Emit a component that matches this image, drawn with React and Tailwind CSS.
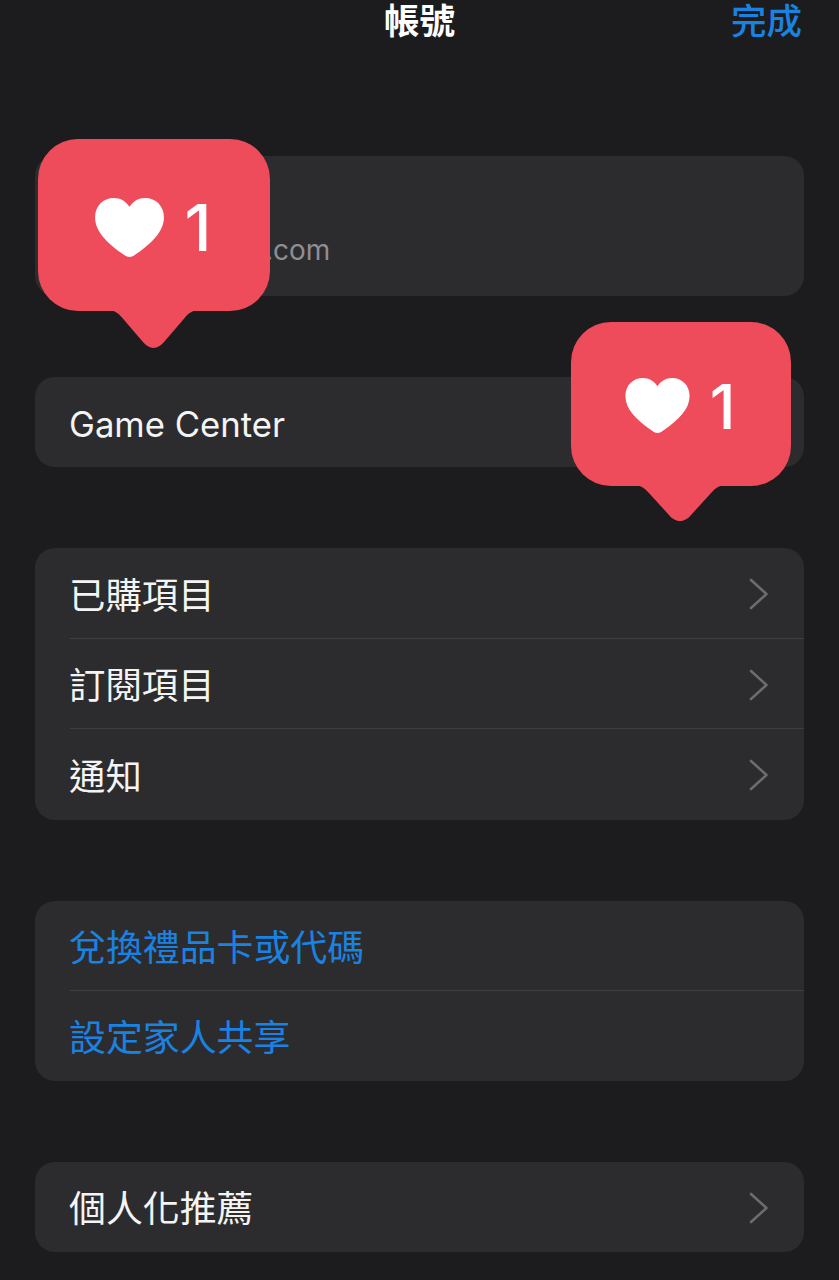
import React from "react";

const CJK = '"Inter","Noto Sans CJK TC",sans-serif';

function Chevron() {
  return (
    <svg width="20" height="32" viewBox="0 0 20 32" fill="none" className="shrink-0">
      <path d="M2 2 L17.5 16 L2 30" stroke="#6b6b70" strokeWidth="2.6" strokeLinecap="round" strokeLinejoin="round" />
    </svg>
  );
}

function Row({ label, blue, chevron, last, tall, latin, small }) {
  return (
    <div className={`relative flex items-center pl-[35px] pr-[35px] ${tall ? "h-[91px]" : "h-[90px]"}`}>
      <span className={`leading-none pt-[5px] -ml-px ${latin ? "text-[34.7px]" : small ? "text-[36.4px]" : "text-[36.9px]"} ${blue ? "text-[#1a82e2]" : "text-[#f4f4f5]"}`}>{label}</span>
      {chevron && <div className="ml-auto pt-[1px]"><Chevron /></div>}
      {!last && <div className="absolute left-[35px] right-0 bottom-0 h-px bg-[#3f3f42]" />}
    </div>
  );
}

function Card({ children, className = "" }) {
  return <div className={`rounded-[20px] bg-[#2c2c2e] overflow-hidden ${className}`}>{children}</div>;
}

function Heart({ w, h }) {
  return (
    <svg width={w} height={h} viewBox="0 0 70 60" fill="#fff" className="shrink-0">
      <path d="M35 60 C32.5 60 30 58.4 26 55.4 C12 45 0 34 0 19.5 C0 8 8.4 0 19 0 C26 0 31.5 3.4 35 9 C38.5 3.4 44 0 51 0 C61.6 0 70 8 70 19.5 C70 34 58 45 44 55.4 C40 58.4 37.500 60 35 60 Z" />
    </svg>
  );
}

function Badge({ className, w, bodyH, tailLeft, tailW, tailH, heartW, heartH, fontSize, gap, numberClass, contentClass }) {
  return (
    <div className={`absolute ${className}`} style={{ width: w }}>
      <div className={`rounded-[40px] bg-[#ef4c5b] flex justify-center ${contentClass}`} style={{ height: bodyH, gap }}>
        <Heart w={heartW} h={heartH} />
        <span className={`leading-none text-white ${numberClass}`} style={{ fontSize }}>1</span>
      </div>
      <svg className="absolute" style={{ left: tailLeft, top: bodyH - 1 }} width={tailW} height={tailH} viewBox="0 0 100 40" preserveAspectRatio="none" fill="#ef4c5b">
        <path d="M0 0 C8 0 12 3 17 9 L38 33 C42 38 46 40 50 40 C54 40 58 38 62 33 L83 9 C88 3 92 0 100 0 Z" />
      </svg>
    </div>
  );
}

export default function App() {
  return (
    <div className="relative w-[839px] h-[1280px] overflow-hidden bg-[#1c1c1e]" style={{ fontFamily: CJK }}>
      <header className="relative h-[156px]">
        <div className="h-[44px] grid grid-cols-[1fr_auto_1fr] items-center px-[37px]">
          <div />
          <span className="text-[35.5px] leading-none font-bold text-white">帳號</span>
          <span className="justify-self-end text-[35.5px] leading-none font-medium text-[#1a82e2]">完成</span>
        </div>
      </header>

      <main className="mx-[35px] flex flex-col gap-[81px]">
        <Card className="h-[140px] flex items-end pb-[32px] pl-[230px]">
          <span className="text-[28px] leading-none text-[#8e8e93]">.com</span>
        </Card>
        <Card><Row label="Game Center" last latin /></Card>
        <Card>
          <Row label="已購項目" chevron tall small />
          <Row label="訂閱項目" chevron small />
          <Row label="通知" chevron last tall small />
        </Card>
        <Card>
          <Row label="兌換禮品卡或代碼" blue />
          <Row label="設定家人共享" blue last />
        </Card>
        <Card><Row label="個人化推薦" chevron last /></Card>
      </main>

      <Badge className="left-[38px] top-[139px]" w={232} bodyH={172} tailLeft={69} tailW={93} tailH={38} heartW={71} heartH={59} fontSize={65} gap="20px" numberClass="font-medium mt-[-3px]" contentClass="pt-[59px] pr-[3px]" />
      <Badge className="left-[571px] top-[322px]" w={220} bodyH={164} tailLeft={62} tailW={94} tailH={36} heartW={67} heartH={55} fontSize={62} gap="19px" numberClass="font-medium mt-[-2px]" contentClass="pt-[56px] pr-[3px]" />
    </div>
  );
}
